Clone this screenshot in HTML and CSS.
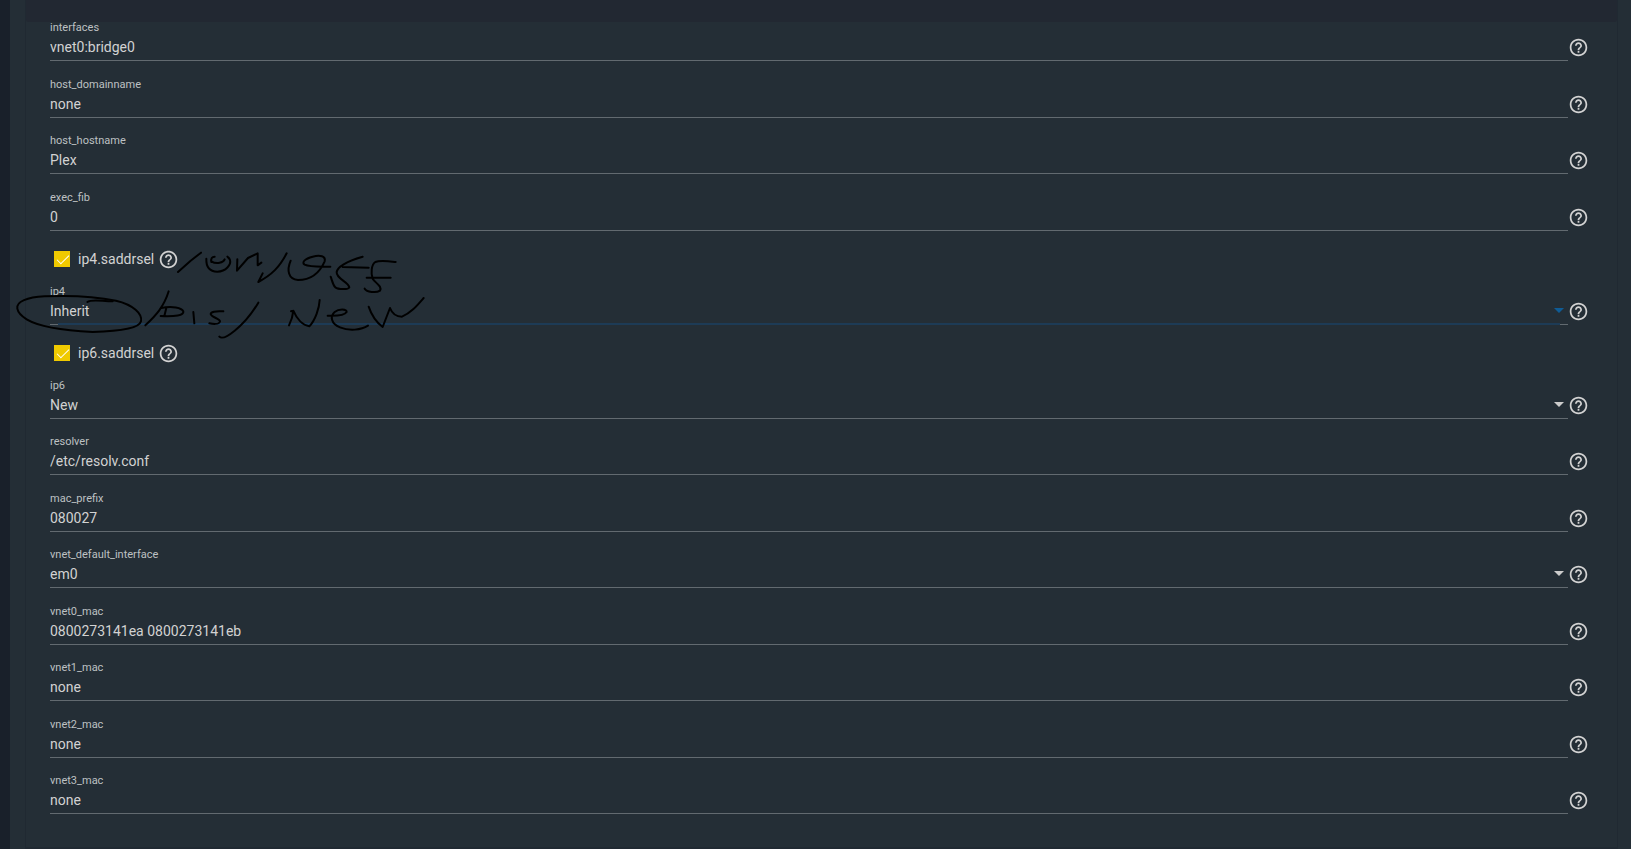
FILE: index.html
```html
<!DOCTYPE html>
<html lang="en">
<head>
  <meta charset="UTF-8">
  <meta name="viewport" content="width=device-width, initial-scale=1.0">
  <title>Jail Network Properties</title>
  <link rel="stylesheet" href="styles.css">
</head>
<body>

<!-- help icon, shared by all fields -->
<svg class="sprite" aria-hidden="true">
  <symbol id="help" viewBox="0 0 24 24">
    <path d="M11 18h2v-2h-2v2zm1-16C6.48 2 2 6.48 2 12s4.48 10 10 10 10-4.480 10-10S17.520 2 12 2zm0 18c-4.410 0-8-3.590-8-8s3.590-8 8-8 8 3.590 8 8-3.590 8-8 8zm0-14c-2.210 0-4 1.790-4 4h2c0-1.100.900-2 2-2s2 .900 2 2c0 2-3 1.750-3 5h2c0-2.250 3-2.500 3-5 0-2.210-1.790-4-4-4z"/>
  </symbol>
</svg>

<main class="content">
  <div class="card">
    <div class="card-top"></div>
    <form class="form">

      <div class="field">
        <label for="interfaces">interfaces</label>
        <input type="text" id="interfaces" value="vnet0:bridge0">
        <svg class="help"><use href="#help"/></svg>
      </div>

      <div class="field">
        <label for="host_domainname">host_domainname</label>
        <input type="text" id="host_domainname" value="none">
        <svg class="help"><use href="#help"/></svg>
      </div>

      <div class="field">
        <label for="host_hostname">host_hostname</label>
        <input type="text" id="host_hostname" value="Plex">
        <svg class="help"><use href="#help"/></svg>
      </div>

      <div class="field">
        <label for="exec_fib">exec_fib</label>
        <input type="text" id="exec_fib" value="0">
        <svg class="help"><use href="#help"/></svg>
      </div>

      <div class="check">
        <input type="checkbox" id="ip4_saddrsel" checked>
        <label for="ip4_saddrsel">ip4.saddrsel</label>
        <svg class="help"><use href="#help"/></svg>

        <!-- pen notes over the ip4 rows -->
        <svg class="notes" viewBox="0 0 1260 330" aria-hidden="true">
          <path d="M22 206 C18 184 52 172 104 169 C170 166 250 168 318 182 C370 194 398 222 393 244 C388 266 330 274 248 276 C170 272 90 262 50 238 C34 228 24 218 22 206"/>
          <path d="M232 186 C246 176 276 184 308 184"/>
          <path d="M504 96 L542 62 L573 38"/>
          <path d="M589 56 C588 80 598 94 622 95 C648 94 664 74 660 60 C658 54 654 52 652 50 M604 66 C602 56 606 50 614 50 M604 64 C620 74 640 68 644 58"/>
          <path d="M682 58 L681 92 L714 54 L743 40 L743 76 L754 68"/>
          <path d="M830 40 C808 82 786 104 745 126 L758 100"/>
          <path d="M842 62 C830 90 834 118 864 120 C904 120 930 96 944 64 C948 48 930 44 908 50 C884 56 874 68 884 74 C900 82 930 80 961 80"/>
          <path d="M1058 50 C1024 60 984 74 980 96 C978 116 1016 126 1018 142 C1014 150 984 148 976 142 C968 134 966 120 962 110 M998 81 L1076 83"/>
          <path d="M1157 66 C1140 64 1110 60 1096 66 C1084 74 1082 100 1088 116 C1096 130 1118 138 1110 152 C1098 160 1070 156 1064 146 M1070 113 L1142 113"/>
          <path d="M476 154 C462 200 438 226 406 256"/>
          <path d="M469 204 L463 228 M454 204 C486 196 516 204 520 214 C522 226 496 230 452 228"/>
          <path d="M550 216 L553 250 M640 214 C616 212 602 216 602 222 C604 232 630 236 630 244 C628 254 608 252 598 250"/>
          <path d="M745 188 C726 220 702 250 674 272 C652 290 636 298 628 290"/>
          <path d="M843 214 L850 212 C848 234 842 246 837 256 M850 212 C860 236 878 256 898 259 C916 240 928 204 929 180"/>
          <path d="M953 227 C980 228 1004 226 1010 216 C1010 206 986 206 974 216 C960 228 962 250 990 262 C1018 274 1054 270 1074 257"/>
          <path d="M1076 200 C1084 224 1098 246 1118 261 L1140 204 C1146 220 1160 230 1176 230 C1204 218 1222 196 1241 174"/>
        </svg>
      </div>

      <div class="field field-select active">
        <label for="ip4">ip4</label>
        <select id="ip4">
          <option>Inherit</option>
          <option>Disabled</option>
          <option>New</option>
        </select>
        <svg class="help"><use href="#help"/></svg>
      </div>

      <div class="check">
        <input type="checkbox" id="ip6_saddrsel" checked>
        <label for="ip6_saddrsel">ip6.saddrsel</label>
        <svg class="help"><use href="#help"/></svg>
      </div>

      <div class="field field-select">
        <label for="ip6">ip6</label>
        <select id="ip6">
          <option>New</option>
          <option>Inherit</option>
          <option>Disabled</option>
        </select>
        <svg class="help"><use href="#help"/></svg>
      </div>

      <div class="field">
        <label for="resolver">resolver</label>
        <input type="text" id="resolver" value="/etc/resolv.conf">
        <svg class="help"><use href="#help"/></svg>
      </div>

      <div class="field">
        <label for="mac_prefix">mac_prefix</label>
        <input type="text" id="mac_prefix" value="080027">
        <svg class="help"><use href="#help"/></svg>
      </div>

      <div class="field field-select">
        <label for="vnet_default_interface">vnet_default_interface</label>
        <select id="vnet_default_interface">
          <option>em0</option>
          <option>none</option>
        </select>
        <svg class="help"><use href="#help"/></svg>
      </div>

      <div class="field">
        <label for="vnet0_mac">vnet0_mac</label>
        <input type="text" id="vnet0_mac" value="0800273141ea 0800273141eb">
        <svg class="help"><use href="#help"/></svg>
      </div>

      <div class="field">
        <label for="vnet1_mac">vnet1_mac</label>
        <input type="text" id="vnet1_mac" value="none">
        <svg class="help"><use href="#help"/></svg>
      </div>

      <div class="field">
        <label for="vnet2_mac">vnet2_mac</label>
        <input type="text" id="vnet2_mac" value="none">
        <svg class="help"><use href="#help"/></svg>
      </div>

      <div class="field">
        <label for="vnet3_mac">vnet3_mac</label>
        <input type="text" id="vnet3_mac" value="none">
        <svg class="help"><use href="#help"/></svg>
      </div>

    </form>
  </div>
</main>

</body>
</html>
```
FILE: styles.css
```css
* {
  box-sizing: border-box;
}

body {
  margin: 0;
  font-family: Roboto, sans-serif;
  font-size: 14px;
  color: #d2d2d2;
  background-color: #242e36;
}

.sprite {
  display: none;
}

.content {
  border-left: 10px solid #19202a;
  padding: 0 13px 0 15px;
}

.card {
  border: 1px solid #202932;
  border-top: none;
  border-bottom-width: 2px;
}

.card-top {
  height: 22px;
  background-color: #222832;
  border-radius: 0 0 3px 3px;
}

.form {
  padding: 0 28px 33px 24px;
}

/* label on the first row, control and help icon on the second */
.field {
  display: grid;
  grid-template-columns: 1fr 21px;
  grid-template-rows: 12px 27px;
  margin-top: 17px;
}

.field:nth-child(even) {
  margin-top: 18px;
}

.field:first-child {
  margin-top: 0;
}

.field label {
  grid-column: 1 / 3;
  font-size: 11px;
  line-height: 12px;
  color: #bec1c3;
}

.field input,
.field select {
  width: 100%;
  height: 27px;
  margin: 0;
  padding: 0;
  border: none;
  border-bottom: 1px solid #626a70;
  border-radius: 0;
  outline: none;
  background: none;
  color: inherit;
  font: inherit;
  appearance: none;
}

.field option {
  background-color: #242e36;
}

.help {
  width: 21px;
  height: 21px;
  fill: #d2d2d2;
}

.field .help {
  align-self: center;
}

.field-select {
  position: relative;
}

/* drop-down arrow */
.field-select::after {
  content: "";
  position: absolute;
  right: 25px;
  bottom: 12px;
  border: 5px solid transparent;
  border-top-color: #cccccc;
  border-bottom: none;
  pointer-events: none;
}

.active::after {
  border-top-color: #0f5c96;
}

.active::before {
  content: "";
  position: absolute;
  left: 8px;
  right: 29px;
  bottom: 0;
  height: 2px;
  background-color: #1d3b56;
}

.check {
  position: relative;
  display: flex;
  align-items: center;
  height: 20px;
  margin-top: 18px;
  padding-left: 4px;
}

.check + .field,
.check + .field:nth-child(even) {
  margin-top: 17px;
}

.check input {
  position: relative;
  width: 16px;
  height: 16px;
  margin: 0 8px 0 0;
  background-color: #f0ca00;
  appearance: none;
}

.check input:checked::before {
  content: "";
  position: absolute;
  left: 3px;
  top: 4px;
  width: 11px;
  height: 5px;
  border: solid #ffffff;
  border-width: 0 0 1px 1px;
  transform: rotate(-45deg);
}

.check label {
  margin-right: 4px;
}

.notes {
  position: absolute;
  left: -40px;
  top: -9px;
  width: 420px;
  height: 110px;
  z-index: 1;
  fill: none;
  stroke: #000000;
  stroke-width: 6;
  stroke-linecap: round;
  stroke-linejoin: round;
  pointer-events: none;
}
```
